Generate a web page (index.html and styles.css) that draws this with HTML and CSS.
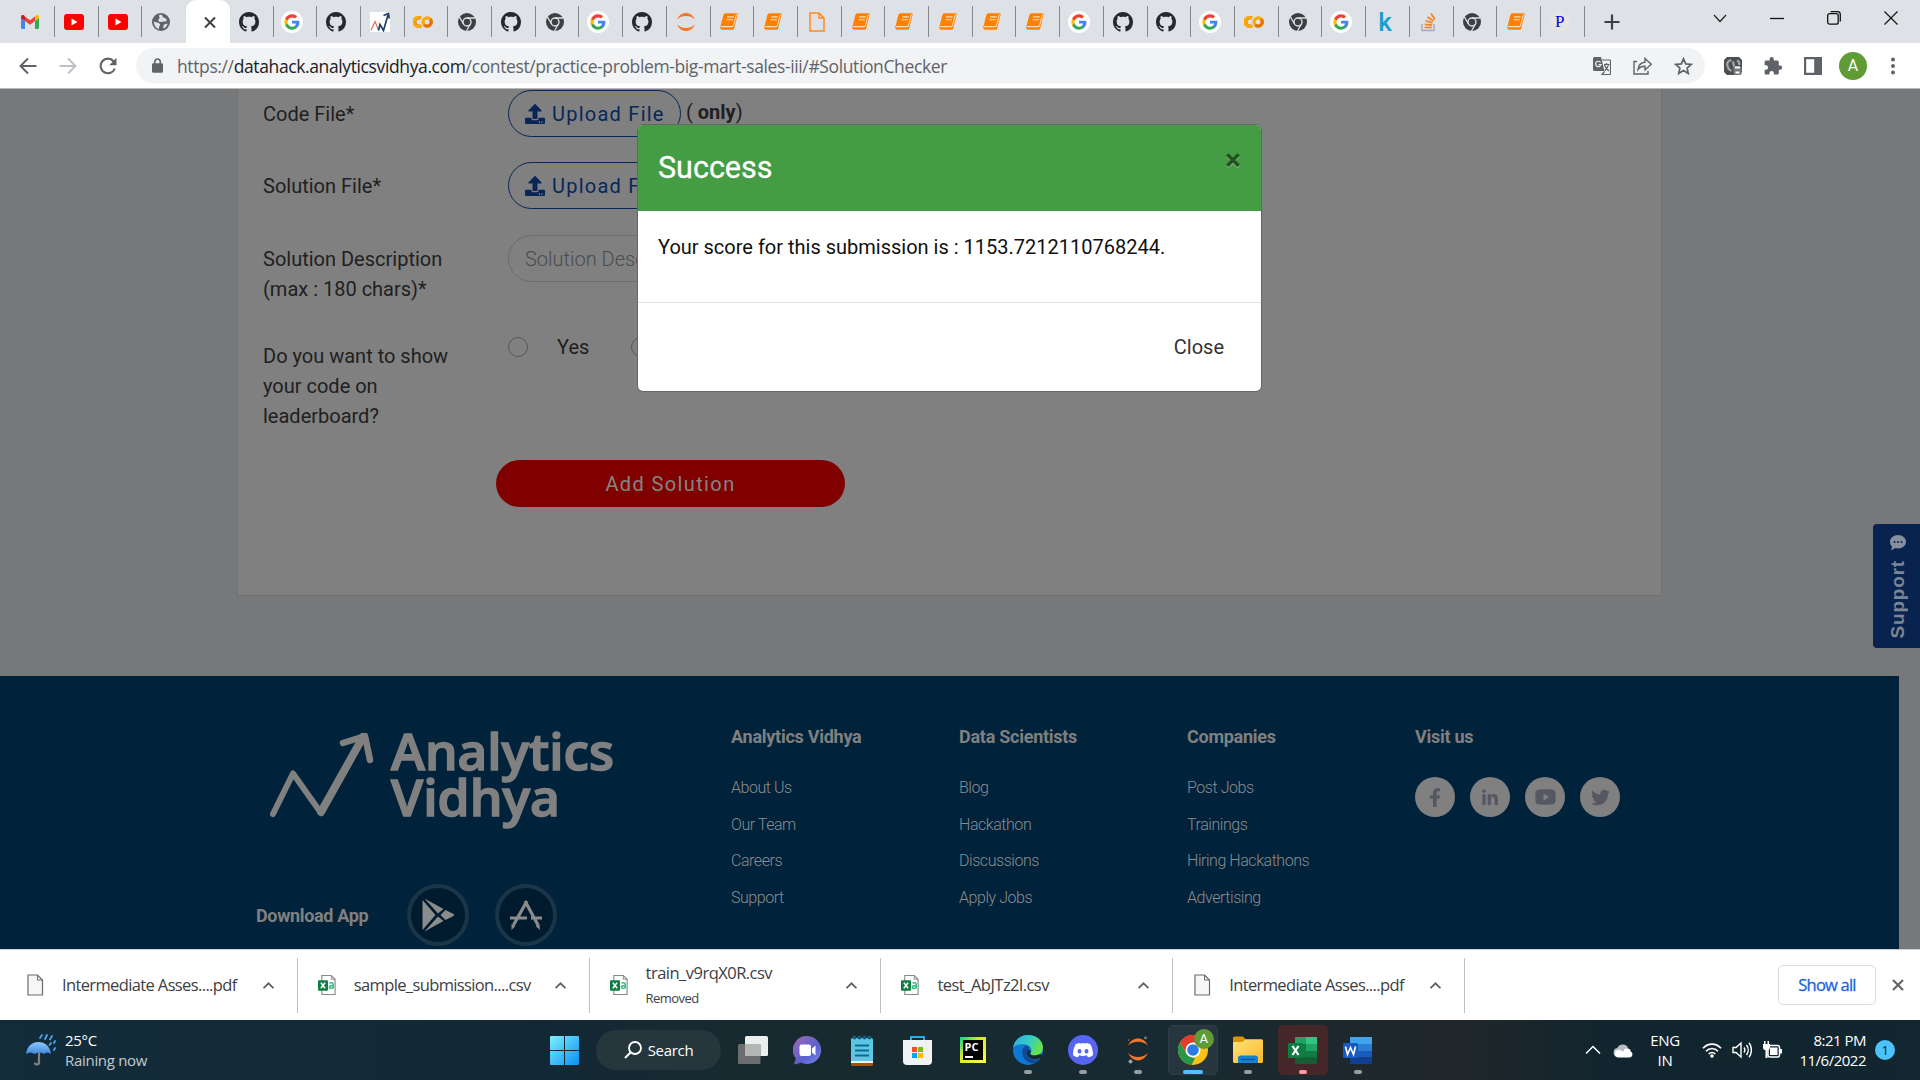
FILE: index.html
```html
<!DOCTYPE html>
<html lang="en">
<head>
<meta charset="utf-8">
<title>Big Mart Sales III</title>
<link rel="stylesheet" href="styles.css">
</head>
<body>
<svg class="defs" width="0" height="0" aria-hidden="true">
  <defs>
    <linearGradient id="lg-win" x1="0" y1="0" x2="1" y2="1"><stop offset="0" stop-color="#7df0fd"/><stop offset="1" stop-color="#0a8ef5"/></linearGradient>
    <linearGradient id="lg-chat" x1="0" y1="0" x2="1" y2="1"><stop offset="0" stop-color="#a06bb0"/><stop offset=".6" stop-color="#5b5fd0"/><stop offset="1" stop-color="#7a90f0"/></linearGradient>
    <linearGradient id="lg-edge" x1="0" y1="0" x2="1" y2=".4"><stop offset="0" stop-color="#2aa9e6"/><stop offset=".6" stop-color="#36cfc0"/><stop offset="1" stop-color="#6ae04a"/></linearGradient>
    <linearGradient id="lg-folder" x1="0" y1="0" x2="1" y2="1"><stop offset="0" stop-color="#ffe27a"/><stop offset="1" stop-color="#f9b82a"/></linearGradient>
    <linearGradient id="lg-umb" x1="0" y1="0" x2="0" y2="1"><stop offset="0" stop-color="#8cc8fa"/><stop offset="1" stop-color="#3c86de"/></linearGradient>
  </defs>
  <symbol id="gmail" viewBox="0 0 20 20"><path fill="#4285f4" d="M1 5.500v10A1.500 1.500 0 0 0 2.500 17H5V9z"/><path fill="#34a853" d="M19 5.500v10a1.500 1.500 0 0 1-1.500 1.500H15V9z"/><path fill="#fbbc04" d="M15 4.500V9l4-3V5c0-2-2-2.500-3.200-1.500z"/><path fill="#c5221f" d="M5 4.500V9L1 6V5c0-2 2-2.500 3.200-1.500z"/><path fill="#ea4335" d="M5 9V4.500l5 3.700 5-3.700V9l-5 3.700z"/></symbol>
  <symbol id="yt" viewBox="0 0 20 20"><rect y="2" width="20" height="16" rx="3" fill="#f00"/><path fill="#fff" d="M7.500 6.500v7l6-3.500z"/></symbol>
  <symbol id="globe" viewBox="0 0 20 20"><circle cx="10" cy="10" r="9" fill="#5f6368"/><path fill="#dee1e6" d="M9.500 2.500c2.500.2 1.500 2 3 3 1.800 1 3.500 1 3.200 3-.3 1.500-3.200.8-4.200 1.200-1.200.5-3.500.3-4.200-.9C6.500 7.500 9 7 8.500 5.500 8 4.500 7.500 3 9.500 2.500zM2.800 9.500c2 .8 5 .8 6.200 2.500.8 1.500-1.500 2-1 5.200-3-.9-5.100-3.700-5.200-7.700zM13 12.500l3.700-1c-.5 2.200-2 4.100-4 5-.6-1.200-.4-2.800.3-4z"/></symbol>
  <symbol id="gh" viewBox="0 0 16 16"><path fill="#24292f" d="M8 0C3.580 0 0 3.580 0 8c0 3.540 2.290 6.530 5.470 7.590.4.070.55-.17.55-.38 0-.19-.01-.82-.01-1.490-2.010.37-2.530-.49-2.690-.94-.09-.23-.48-.94-.82-1.130-.28-.15-.68-.52-.01-.53.63-.01 1.080.58 1.230.82.72 1.210 1.870.87 2.330.66.07-.52.28-.87.51-1.070-1.780-.2-3.640-.89-3.640-3.950 0-.87.31-1.590.82-2.150-.08-.2-.36-1.020.08-2.120 0 0 .67-.21 2.200.82.64-.18 1.320-.27 2-.27s1.360.09 2 .27c1.530-1.040 2.200-.82 2.200-.82.44 1.100.16 1.920.08 2.120.51.56.82 1.270.82 2.150 0 3.070-1.870 3.750-3.650 3.950.29.25.54.73.54 1.480 0 1.070-.01 1.930-.01 2.200 0 .21.15.46.55.38A8.010 8.010 0 0 0 16 8c0-4.420-3.580-8-8-8z"/></symbol>
  <symbol id="goog" viewBox="0 0 24 24"><circle cx="12" cy="12" r="12" fill="#fff"/><g transform="translate(2.900 2.900) scale(.76)"><path fill="#4285f4" d="M22.560 12.250c0-.78-.07-1.530-.2-2.250H12v4.260h5.920c-.26 1.370-1.040 2.530-2.210 3.310v2.770h3.570c2.080-1.920 3.280-4.740 3.280-8.090z"/><path fill="#34a853" d="M12 23c2.970 0 5.460-.98 7.280-2.660l-3.570-2.770c-.98.66-2.230 1.060-3.710 1.060-2.860 0-5.290-1.930-6.160-4.530H2.180v2.840C3.990 20.530 7.700 23 12 23z"/><path fill="#fbbc05" d="M5.840 14.090c-.22-.66-.35-1.360-.35-2.090s.13-1.430.35-2.090V7.070H2.180C1.430 8.550 1 10.220 1 12s.43 3.450 1.180 4.930z"/><path fill="#ea4335" d="M12 5.380c1.620 0 3.060.56 4.210 1.640l3.150-3.150C17.450 2.090 14.970 1 12 1 7.700 1 3.990 3.470 2.180 7.070l3.660 2.840c.87-2.600 3.300-4.530 6.160-4.530z"/></g></symbol>
  <symbol id="av" viewBox="0 0 20 20"><path fill="#fff" d="M0 0h20v20H0z"/><path fill="none" stroke="#e8603c" stroke-width="1.100" d="M1 18 5 9.500 8.500 18"/><path fill="none" stroke="#17406d" stroke-width="1.700" d="m8.500 18.500 1.500-6 3.500 6L18 3M13.500 3.500 18.500 1.500l.7 5"/></symbol>
  <symbol id="colab" viewBox="0 0 20 20"><g fill="none" stroke-width="3.200"><path stroke="#e8710a" d="M8 6.200A4.300 4.300 0 1 0 8 13.800"/><path stroke="#f9ab00" d="M7.500 6.100A4.400 4.400 0 1 0 8.200 13.200"/><circle cx="14.200" cy="10" r="4.100" stroke="#f9ab00"/><path stroke="#e8710a" d="M11.300 12.900a4.100 4.100 0 0 0 5.800-5.800"/></g></symbol>
  <symbol id="chr" viewBox="0 0 20 20"><circle cx="10" cy="10" r="9" fill="#3c4043"/><circle cx="10" cy="10" r="4" fill="none" stroke="#dee1e6" stroke-width="1.400"/><path stroke="#dee1e6" stroke-width="1.300" fill="none" d="M10 6h8M6.500 12 2.500 5.200M13.400 12l-3.900 7"/></symbol>
  <symbol id="jup" viewBox="0 0 20 20"><path fill="#f37726" d="M1 7.500C3 3 6.500 1 10 1s7 2 9 6.500C16.500 5 13.500 4 10 4S3.500 5 1 7.500zM1 12.500C3 17 6.500 19 10 19s7-2 9-6.500C16.500 15 13.500 16 10 16s-6.500-1-9-3.500z"/></symbol>
  <symbol id="book" viewBox="1 1.800 19 16.200" preserveAspectRatio="none"><path fill="#ff8000" d="M7 2h11.300c1 0 1.500.8 1.200 1.700L16 16.500c-.3.900-1 1.300-1.800 1.300H3.600c-1.700 0-2.700-1.300-2.200-3L4.500 4C4.900 2.700 5.700 2 7 2z"/><path fill="none" stroke="#ffe0bd" stroke-width="1" d="M8.500 5.500h7M7.700 8.200h7M2.200 14.800h11.500c.8 0 1.300-.3 1.600-1.100l3-10.500"/></symbol>
  <symbol id="nbfile" viewBox="0 0 20 20"><path fill="none" stroke="#ff8a1c" stroke-width="1.500" stroke-linejoin="round" d="M3 1h9l5 5v13H3zM12 1v5h5"/></symbol>
  <symbol id="so" viewBox="0 0 20 20"><path fill="none" stroke="#aab" stroke-width="1.600" d="M3 12v6.500h12V12"/><path stroke="#f48024" stroke-width="1.700" d="M5.500 15.500h7.500M5.700 12.300l7.400.9M6.500 8.700l7 2.200M8.500 5l6 4M12 1.500l4 6"/></symbol>
  <symbol id="up" viewBox="0 0 512 512"><path fill="currentColor" d="M296 384h-80c-13.300 0-24-10.700-24-24V192h-87.700c-17.800 0-26.700-21.500-14.100-34.100L242.300 5.700c7.500-7.500 19.800-7.500 27.300 0l152.200 152.200c12.600 12.600 3.700 34.100-14.100 34.100H320v168c0 13.300-10.700 24-24 24zm216-8v112c0 13.300-10.700 24-24 24H24c-13.300 0-24-10.700-24-24V376c0-13.300 10.700-24 24-24h136v8c0 30.900 25.100 56 56 56h80c30.900 0 56-25.100 56-56v-8h136c13.300 0 24 10.700 24 24zm-124 88c0-11-9-20-20-20s-20 9-20 20 9 20 20 20 20-9 20-20zm64 0c0-11-9-20-20-20s-20 9-20 20 9 20 20 20 20-9 20-20z"/></symbol>
  <symbol id="csv" viewBox="0 0 20 22"><path fill="#fff" stroke="#8a8a8a" stroke-width="1.200" d="M4 1h10l4 4v16H4z"/><path fill="none" stroke="#8a8a8a" d="M14 1v4h4"/><rect x="0" y="6" width="10.500" height="11" rx="1" fill="#107c41"/><path stroke="#fff" stroke-width="1.700" d="m3 8.500 4.500 6M7.500 8.500 3 14.500"/><path fill="none" stroke="#33c481" stroke-width="1.700" d="M12.200 9.300c1-1 3.800-1 3.800 1v4.500m0-3c-1.500-.2-4 0-4 1.600s3.300 1.700 4 0"/></symbol>
  <symbol id="pdf" viewBox="0 0 18 22"><path fill="#f7f7f7" stroke="#6b6b6b" stroke-width="1.200" d="M1.500 1H11l5 5v15H1.500z"/><path fill="none" stroke="#6b6b6b" d="M11 1v5h5"/></symbol>
  <symbol id="chev" viewBox="0 0 14 10"><path fill="none" stroke="#5f6368" stroke-width="2" d="m1.500 8 5.500-5.500L12.500 8"/></symbol>
</svg>

<header class="tabs">
  <div class="tab"><svg class="ico"><use href="#gmail"/></svg></div>
  <div class="tab"><svg class="ico"><use href="#yt"/></svg></div>
  <div class="tab"><svg class="ico"><use href="#yt"/></svg></div>
  <div class="tab bare"><svg class="ico"><use href="#globe"/></svg></div>
  <div class="tab active"><svg class="ico" viewBox="0 0 20 20"><path stroke="#3c4043" stroke-width="2" d="m5 5.500 10 10M15 5.500l-10 10"/></svg></div>
  <div class="tab"><svg class="ico"><use href="#gh"/></svg></div>
  <div class="tab"><svg class="ico big"><use href="#goog"/></svg></div>
  <div class="tab"><svg class="ico"><use href="#gh"/></svg></div>
  <div class="tab"><svg class="ico"><use href="#av"/></svg></div>
  <div class="tab"><svg class="ico"><use href="#colab"/></svg></div>
  <div class="tab"><svg class="ico"><use href="#chr"/></svg></div>
  <div class="tab"><svg class="ico"><use href="#gh"/></svg></div>
  <div class="tab"><svg class="ico"><use href="#chr"/></svg></div>
  <div class="tab"><svg class="ico big"><use href="#goog"/></svg></div>
  <div class="tab"><svg class="ico"><use href="#gh"/></svg></div>
  <div class="tab"><svg class="ico"><use href="#jup"/></svg></div>
  <div class="tab"><svg class="ico book"><use href="#book"/></svg></div>
  <div class="tab"><svg class="ico book"><use href="#book"/></svg></div>
  <div class="tab"><svg class="ico"><use href="#nbfile"/></svg></div>
  <div class="tab"><svg class="ico book"><use href="#book"/></svg></div>
  <div class="tab"><svg class="ico book"><use href="#book"/></svg></div>
  <div class="tab"><svg class="ico book"><use href="#book"/></svg></div>
  <div class="tab"><svg class="ico book"><use href="#book"/></svg></div>
  <div class="tab"><svg class="ico book"><use href="#book"/></svg></div>
  <div class="tab"><svg class="ico big"><use href="#goog"/></svg></div>
  <div class="tab"><svg class="ico"><use href="#gh"/></svg></div>
  <div class="tab"><svg class="ico"><use href="#gh"/></svg></div>
  <div class="tab"><svg class="ico big"><use href="#goog"/></svg></div>
  <div class="tab"><svg class="ico"><use href="#colab"/></svg></div>
  <div class="tab"><svg class="ico"><use href="#chr"/></svg></div>
  <div class="tab"><svg class="ico big"><use href="#goog"/></svg></div>
  <div class="tab"><span class="kaggle">k</span></div>
  <div class="tab"><svg class="ico"><use href="#so"/></svg></div>
  <div class="tab"><svg class="ico"><use href="#chr"/></svg></div>
  <div class="tab"><svg class="ico book"><use href="#book"/></svg></div>
  <div class="tab"><span class="pfav">P</span></div>
  <svg class="plus" viewBox="0 0 16 16"><path stroke="#3c4043" stroke-width="2.200" d="M8 .5v15M.5 8h15"/></svg>
  <div class="winctl">
    <svg width="14" height="9" viewBox="0 0 14 9"><path fill="none" stroke="#222" stroke-width="1.200" d="m1 1 6 6.500L13 1"/></svg>
    <svg width="14" height="14" viewBox="0 0 14 14"><path stroke="#111" stroke-width="1.300" d="M0 7.500h14"/></svg>
    <svg width="14" height="14" viewBox="0 0 14 14"><rect x=".7" y="2.700" width="10.500" height="10.500" rx="2" fill="none" stroke="#111" stroke-width="1.300"/><path fill="none" stroke="#111" stroke-width="1.300" d="M3.500.7h7c1.800 0 2.800 1 2.800 2.800v7"/></svg>
    <svg width="14" height="14" viewBox="0 0 14 14"><path stroke="#111" stroke-width="1.200" d="m.5.5 13 13m0-13-13 13"/></svg>
  </div>
</header>

<nav class="toolbar">
  <div class="navbtns">
    <svg width="18" height="18" viewBox="0 0 18 18"><path fill="none" stroke="#5f6368" stroke-width="2" d="M17.500 9H2M9 1.500 1.500 9 9 16.500"/></svg>
    <svg width="18" height="18" viewBox="0 0 18 18"><path fill="none" stroke="#bdc1c6" stroke-width="2" d="M.5 9H16M9 1.500 16.500 9 9 16.500"/></svg>
    <svg width="18" height="18" viewBox="0 0 18 18"><path fill="none" stroke="#5f6368" stroke-width="2.100" d="M15.800 11.500A7.300 7.300 0 1 1 14.500 4.200l1.500 1.800"/><path fill="#5f6368" d="M17.500.8v7.400h-7.300z"/></svg>
  </div>
  <div class="omni">
    <svg class="lock" viewBox="0 0 12 16"><rect y="5.500" width="12" height="10.500" rx="1.500" fill="#5f6368"/><path fill="none" stroke="#5f6368" stroke-width="1.700" d="M3 6V4a3 3 0 0 1 6 0v2"/></svg>
    <span class="url">https://<b>datahack.analyticsvidhya.com</b>/contest/practice-problem-big-mart-sales-iii/#SolutionChecker</span>
    <div class="omniacts">
      <svg width="18" height="18" viewBox="0 0 18 18"><path fill="#5f6368" d="M1.500 0H8l3.500 14H1.500A1.500 1.500 0 0 1 0 12.500v-11A1.500 1.500 0 0 1 1.500 0z"/><path fill="none" stroke="#f1f3f4" stroke-width="1.200" d="M7.500 5.300A2.700 2.700 0 1 0 8 7.500H5.500"/><path fill="none" stroke="#5f6368" stroke-width="1.200" d="M9 3h7.500c.6 0 1 .4 1 1v12.500c0 .6-.4 1-1 1H9l2.500-3M11 7.500h5.500M13.500 6v1.500M15.500 7.500c-.5 3-2 4.500-3.500 6M11.500 8c1 3 2.500 4.500 4.500 6"/></svg>
      <svg width="19" height="18" viewBox="0 0 19 18"><path fill="none" stroke="#5f6368" stroke-width="1.400" d="M4 4.500H1V17h14v-3M5 12.500C5.500 8 8 5.500 12 5.200V1.500l6.200 5.800L12 13V9.300c-3-.1-5.300.9-7 3.200z"/></svg>
      <svg width="19" height="18" viewBox="0 0 19 18"><path fill="none" stroke="#5f6368" stroke-width="1.700" d="m9.500 1.800 2.200 5.100 5.500.5-4.100 3.700 1.200 5.400-4.800-2.900-4.800 2.900 1.200-5.400-4.100-3.700 5.500-.5z"/></svg>
    </div>
  </div>
  <div class="exts">
    <svg width="18" height="18" viewBox="0 0 18 18"><path fill="#4c4f52" d="M3 0h12l3 3v12l-3 3H3l-3-3V3z"/><path fill="none" stroke="#a4a6a8" stroke-width="2.200" d="M7.500 3.500C4.500 3 2.500 6 3.500 9s2.500 5 4 4M9 4.500c.5 3 1 4 1.500 6M13 3.500c2.500 1 2.500 3 2 4.500"/><rect x="9.500" y="9" width="8" height="9" rx="1.500" fill="#77797b"/><path stroke="#fff" stroke-width="1.800" fill="none" d="M11 10.500h5M11.500 15.500h4"/></svg>
    <svg width="18" height="18" viewBox="0 0 18 18"><path fill="#5f6368" d="M16 8.500h-1.200V5c0-.9-.7-1.600-1.600-1.600H9.800V2.200a2.100 2.100 0 0 0-4.200 0v1.200H2.200C1.300 3.400.6 4.100.6 5v3.200h1.200a2.200 2.200 0 0 1 0 4.500H.6v3.200c0 .9.700 1.600 1.600 1.600h3.200v-1.200a2.200 2.200 0 0 1 4.500 0v1.200h3.300c.9 0 1.600-.7 1.600-1.600v-3.200H16a2.100 2.100 0 0 0 0-4.200z"/></svg>
    <svg width="18" height="18" viewBox="0 0 18 18"><path fill="#5f6368" fill-rule="evenodd" d="M0 0h18v18H0zM2.200 2.200v13.600h8V2.200z"/></svg>
    <span class="avatar">A</span>
    <svg width="18" height="18" viewBox="0 0 18 18"><g fill="#5f6368"><circle cx="9" cy="2.500" r="2"/><circle cx="9" cy="9" r="2"/><circle cx="9" cy="15.500" r="2"/></g></svg>
  </div>
</nav>

<main class="page">
  <section class="card">
    <div class="row r1"><label>Code File*</label><span class="upload"><svg><use href="#up"/></svg>Upload File</span><span class="only">( <b>only</b>)</span></div>
    <div class="row r2"><label>Solution File*</label><span class="upload"><svg><use href="#up"/></svg>Upload File</span></div>
    <div class="row r3"><label>Solution Description<br>(max : 180 chars)*</label><span class="field">Solution Description</span></div>
    <div class="row r4"><label>Do you want to show<br>your code on<br>leaderboard?</label><span class="radios"><i></i><span>Yes</span><i></i></span></div>
    <div class="submit">Add Solution</div>
  </section>

  <footer class="foot">
    <div class="brand">
      <svg class="logo" viewBox="0 0 360 100"><path fill="none" stroke="#808080" stroke-width="6" stroke-linecap="round" stroke-linejoin="round" d="M7 84 27 43.500 55 83"/><path fill="none" stroke="#808080" stroke-width="8" stroke-linecap="round" stroke-linejoin="round" d="M55 82 97 7"/><path fill="none" stroke="#808080" stroke-width="6.500" stroke-linecap="round" stroke-linejoin="round" d="M77 13 99 6l5 24"/><text x="125" y="39.500" textLength="223" lengthAdjust="spacingAndGlyphs">Analytics</text><text x="125" y="86" textLength="169" lengthAdjust="spacingAndGlyphs">Vidhya</text></svg>
      <div class="apps"><strong>Download App</strong>
        <span class="app"><svg width="34" height="34" viewBox="0 0 34 34"><g fill="#8c8c8c"><path d="M1.500 2v30L14.500 17z"/><path d="M3.500.5 22.500 11 17 15.500zM3.500 33.500 22.500 23 17 18.500zM24.500 12l8 4q1.500 1 0 2l-8 4-5-5z"/></g></svg></span>
        <span class="app"><svg width="34" height="32" viewBox="0 0 34 32"><path fill="none" stroke="#8c8c8c" stroke-width="3.200" d="M18 2 4.500 26M16 2l13 24M1 19h17M22 19h11"/><path fill="#8c8c8c" d="m2.500 25 4 2-4 4zM30.500 25l-4 2 4.500 4z"/></svg></span>
      </div>
    </div>
    <div class="col"><h4>Analytics Vidhya</h4><a>About Us</a><a>Our Team</a><a>Careers</a><a>Support</a></div>
    <div class="col"><h4>Data Scientists</h4><a>Blog</a><a>Hackathon</a><a>Discussions</a><a>Apply Jobs</a></div>
    <div class="col"><h4>Companies</h4><a>Post Jobs</a><a>Trainings</a><a>Hiring Hackathons</a><a>Advertising</a></div>
    <div class="col"><h4>Visit us</h4>
      <div class="social">
        <span><svg width="12" height="19" viewBox="0 0 320 512"><path d="M279 288l14-93h-89v-60c0-25 12-50 52-50h41V7s-37-7-72-7c-73 0-121 44-121 125v70H23v93h81v224h100V288z"/></svg></span>
        <span><svg width="18" height="18" viewBox="0 0 448 512"><path d="M100.300 480H7.400V180.900h92.900zM53.800 140.100C24.100 140.100 0 115.500 0 85.800a53.800 53.800 0 0 1 107.600 0c0 29.700-24.100 54.300-53.800 54.300zM447.900 480h-92.700V334.400c0-34.700-.7-79.200-48.300-79.200-48.300 0-55.700 37.700-55.700 76.700V480h-92.800V180.900h89.100v40.800h1.300c12.400-23.500 42.700-48.300 87.900-48.300 94 0 111.300 61.900 111.300 142.300z"/></svg></span>
        <span><svg width="21" height="16" viewBox="0 0 21 16"><path fill-rule="evenodd" d="M3 .8C6 .2 15 .2 18 .8c2 .4 2.700 2 2.700 7.200s-.7 6.800-2.700 7.200c-3 .6-12 .6-15 0C1 14.800.3 13.200.3 8S1 1.200 3 .8zM8.500 4.600v6.800L14.300 8z"/></svg></span>
        <span><svg width="19" height="19" viewBox="0 0 512 512"><path d="M459.400 151.700c.3 4.500.3 9.100.3 13.600 0 138.700-105.600 298.600-298.600 298.600-59.500 0-114.700-17.200-161.100-47.100 8.400 1 16.600 1.300 25.300 1.300 49.100 0 94.200-16.600 130.300-44.800-46.100-1-84.800-31.200-98.100-72.800 6.500 1 13 1.600 19.800 1.600 9.400 0 18.800-1.300 27.600-3.600-48.100-9.700-84.100-52-84.100-103v-1.300c14 7.800 30.200 12.700 47.400 13.300-28.300-18.800-46.800-51-46.800-87.400 0-19.500 5.200-37.400 14.300-53 51.700 63.700 129.300 105.300 216.400 109.800-1.600-7.800-2.600-15.900-2.600-24 0-57.800 46.800-104.900 104.900-104.900 30.200 0 57.500 12.700 76.700 33.100 23.700-4.500 46.500-13.300 66.600-25.300-7.800 24.400-24.400 44.800-46.100 57.800 21.100-2.300 41.600-8.100 60.400-16.200-14.300 20.800-32.200 39.300-52.600 54.300z"/></svg></span>
      </div>
    </div>
  </footer>

  <aside class="support"><span>Support</span><svg width="16" height="16" viewBox="0 0 16 16"><path fill="#868f9e" d="M8 0c4.500 0 8 3 8 6.800s-3.500 6.700-8 6.700c-1 0-2-.1-2.800-.4C4 14.300 2 15 .5 15c1-1 1.500-2 1.500-3.500C.7 10.300 0 8.600 0 6.800 0 3 3.500 0 8 0z"/><g fill="#08234f"><circle cx="4.500" cy="7" r="1"/><circle cx="8" cy="7" r="1"/><circle cx="11.500" cy="7" r="1"/></g></svg></aside>

  <div class="modal" role="dialog">
    <div class="mhead"><h2>Success</h2><span class="mx">×</span></div>
    <div class="mbody">Your score for this submission is : 1153.7212110768244.</div>
    <div class="mfoot">Close</div>
  </div>
</main>

<section class="shelf">
  <div class="dl"><svg class="fi"><use href="#pdf"/></svg><span class="fn">Intermediate Asses....pdf</span><svg class="cv"><use href="#chev"/></svg></div>
  <div class="dl"><svg class="fi"><use href="#csv"/></svg><span class="fn">sample_submission....csv</span><svg class="cv"><use href="#chev"/></svg></div>
  <div class="dl"><svg class="fi"><use href="#csv"/></svg><span class="fn short two"><span>train_v9rqX0R.csv</span><small>Removed</small></span><svg class="cv"><use href="#chev"/></svg></div>
  <div class="dl"><svg class="fi"><use href="#csv"/></svg><span class="fn short">test_AbJTz2l.csv</span><svg class="cv"><use href="#chev"/></svg></div>
  <div class="dl"><svg class="fi"><use href="#pdf"/></svg><span class="fn">Intermediate Asses....pdf</span><svg class="cv"><use href="#chev"/></svg></div>
  <span class="showall">Show all</span>
  <svg class="shx" viewBox="0 0 12 12"><path stroke="#5f6368" stroke-width="2.100" d="m1 1 10 10M11 1 1 11"/></svg>
</section>

<footer class="task">
  <div class="weather">
    <svg width="30" height="32" viewBox="0 0 30 32"><path fill="none" stroke="#8b8078" stroke-width="2.200" d="M13 17v11c0 3.500-4 3-4 .5"/><path fill="url(#lg-umb)" d="M0 20C1 12 6 8 12.500 8S24 12 25 20c-2.500-2-5-2-7 0-2-1.800-7-1.800-9.500 0C6 18 3 18 0 20z"/><path stroke="#4aa3ee" stroke-width="1.800" stroke-linecap="round" d="m16 1-2 3M21 1l-2 4M26 2l-2 3.500M29 7l-1 2M25 9l-1.500 2M29 14l-1 2"/></svg>
    <div class="wt"><span>25°C</span><span class="dim">Raining now</span></div>
  </div>
  <div class="apps-bar">
    <svg width="29" height="29" viewBox="0 0 29 29"><path fill="url(#lg-win)" d="M1 0h13v14H0V1a1 1 0 0 1 1-1zM15 0h13a1 1 0 0 1 1 1v13H15zM0 15h14v14H1a1 1 0 0 1-1-1zM15 15h14v13a1 1 0 0 1-1 1H15z"/></svg>
    <div class="search"><svg width="18" height="18" viewBox="0 0 18 18"><circle cx="11" cy="7" r="6" fill="none" stroke="#fff" stroke-width="1.800"/><path stroke="#fff" stroke-width="2" d="M6.500 11.500 1 17"/></svg>Search</div>
    <div class="cell"><svg width="30" height="28" viewBox="0 0 30 28"><rect x="7" y="0" width="23" height="20" rx="1.500" fill="#eceeee"/><rect x="0" y="8" width="22.500" height="20" rx="1.500" fill="#6b6d6e"/><path fill="#b4b6b6" d="M7 8h15.500v12H7z"/></svg></div>
    <div class="cell"><svg width="29" height="29" viewBox="0 0 29 29"><path fill="url(#lg-chat)" d="M14.500 0a14 14 0 1 1-6 26.800L1 28.500l1.800-6A14 14 0 0 1 14.500 0z"/><rect x="6.500" y="8.500" width="11.500" height="11.500" rx="2" fill="#fff"/><path fill="#fff" d="m19 12.500 3.500-3v10l-3.500-3z"/></svg></div>
    <div class="cell"><svg width="23" height="31" viewBox="0 0 23 31"><rect x="0" y="3" width="22" height="26" rx="1.500" fill="#5cc6e4"/><path fill="#f0f0ee" d="M0 26h22v2H0z"/><path fill="#a4500f" d="M0 28h22v1.500a1.500 1.500 0 0 1-1.500 1.500h-19A1.500 1.500 0 0 1 0 29.500z"/><path stroke="#0d6a91" stroke-width="2" d="M4 10.500h14M4 15.500h14M4 20.500h14"/><g fill="#0f5a80"><circle cx="3.500" cy="2.500" r="2"/><circle cx="8.500" cy="2.500" r="2"/><circle cx="13.500" cy="2.500" r="2"/><circle cx="18.500" cy="2.500" r="2"/></g></svg></div>
    <div class="cell"><svg width="29" height="29" viewBox="0 0 29 29"><path fill="none" stroke="#29a9ea" stroke-width="2" d="M8 6V1h13v5"/><path fill="#f1f2f3" d="M0 4h29v21a4 4 0 0 1-4 4H4a4 4 0 0 1-4-4z"/><path fill="#f25022" d="M9 11h5v5H9z"/><path fill="#7fba00" d="M15 11h5v5h-5z"/><path fill="#00a4ef" d="M9 17h5v5H9z"/><path fill="#ffb900" d="M15 17h5v5h-5z"/></svg></div>
    <div class="cell"><span class="pyc">PC<i></i></span></div>
    <div class="cell run"><svg width="30" height="30" viewBox="0 0 30 30"><circle cx="15" cy="15" r="15" fill="#0f78d4"/><path fill="url(#lg-edge)" d="M0 13C1 5 7 0 15 0c9 0 15 6 15 12.500 0 5-3.500 8-8 8-3.500 0-5.300-1.200-4.500-2.500 2-3 .5-7.500-5-8.500C7 8.500 2 10 0 13z"/><path fill="#134a94" d="M13 10.500c-6 3-5 14 4 17.500 4.500 1.500 8.500-1 11-5-5 3-14 1.500-14-5 0-1.500.8-2.500 2-3.500 0-2-1-3.500-3-4z"/><path fill="#16292f" d="M14.500 15.500c2-1.500 4 0 3 2.500-1 1.500.7 2.500 4.500 2.500l4-1c3-1 4 1 2.500 3-6 3-14 1.500-14.500-4z"/></svg></div>
    <div class="cell run"><svg width="30" height="30" viewBox="0 0 30 30"><circle cx="15" cy="15" r="15" fill="#5865f2"/><path fill="#fff" fill-rule="evenodd" d="M12 8.500 11.500 8C9.500 8.300 8 9 7.500 9.500 5.500 13 5 16.500 5 20c1.500 1.500 3.500 2.200 5 2.200l1.200-1.900c2.500.8 5.100.8 7.600 0l1.200 1.900c1.500 0 3.500-.7 5-2.200 0-3.500-.5-7-2.500-10.500C22 9 20.500 8.300 18.500 8l-.5.500c-2-.3-4-.3-6 0zM11.500 14a2 2.200 0 1 0 0 4.400 2 2.200 0 0 0 0-4.400zm7 0a2 2.200 0 1 0 0 4.400 2 2.200 0 0 0 0-4.400z"/></svg></div>
    <div class="cell run"><svg width="22" height="28" viewBox="0 0 22 28"><path fill="#f37726" d="M1 9.500C3 5 7 2.500 11 2.500S19 5 21 9.500C18 7 15 5.800 11 5.800S4 7 1 9.500zM1 17c2 4.500 6 7.500 10 7.500s8-3 10-7.500c-3 2.800-6 4-10 4s-7-1.200-10-4z"/><circle cx="18.500" cy="1.700" r="1.500" fill="#777"/><circle cx="3.500" cy="25.500" r="2" fill="#9e9e9e"/><circle cx="1.500" cy="4" r="1" fill="#666"/></svg></div>
    <div class="cell run box blue"><svg width="30" height="30" viewBox="0 0 30 30"><circle cx="15" cy="15" r="15" fill="#fbc116"/><path fill="#e33b2e" d="M2 7.500A15 15 0 0 1 28 7.500H15l-6.500 11z"/><path fill="#279847" d="M2 7.500 8.500 18.800 15 22.500l2 1L13.500 30A15 15 0 0 1 2 7.500z"/><circle cx="15" cy="15" r="7.500" fill="#fff"/><circle cx="15" cy="15" r="5.800" fill="#2c7be5"/></svg><span class="badge">A</span></div>
    <div class="cell run"><svg width="30" height="28" viewBox="0 0 30 28"><path fill="#d99408" d="M0 2a1.500 1.500 0 0 1 1.500-1.500H10l3 3.500-3 3H0z"/><path fill="url(#lg-folder)" d="M0 6h9.500l3-2.700h16c.9 0 1.500.6 1.500 1.500v20.700c0 .9-.6 1.500-1.500 1.500h-27C.6 27 0 26.400 0 25.500z"/><path fill="#1481d3" d="M5 27v-5c0-1.500 1-2.500 2.500-2.500h15c1.500 0 2.500 1 2.500 2.500v5z"/><path stroke="#0a56a0" stroke-width="1.300" d="M8 23.500h14"/></svg></div>
    <div class="cell run box red"><svg width="29" height="27" viewBox="0 0 29 27"><path fill="#185c37" d="M7 0h22v27H7z"/><path fill="#21a366" d="M7 0h11v7H7z"/><path fill="#33c481" d="M18 0h11v7H18z"/><path fill="#107c41" d="M7 7h11v13H7z"/><path fill="#21a366" d="M18 7h11v7H18z"/><path fill="#107c41" d="M18 14h11v6.500H18z"/><rect y="6" width="15" height="15" rx="1.200" fill="#107c41"/><path stroke="#fff" stroke-width="2.200" d="m4.500 9 6 9M10.500 9l-6 9"/></svg></div>
    <div class="cell run"><svg width="29" height="27" viewBox="0 0 29 27"><path fill="#41a5ee" d="M7 0h22v7H7z"/><path fill="#2b7cd3" d="M7 7h22v7H7z"/><path fill="#185abd" d="M7 14h22v6.500H7z"/><path fill="#103f91" d="M7 20.500h22V27H7z"/><rect y="6" width="15" height="15" rx="1.200" fill="#185abd"/><path fill="none" stroke="#fff" stroke-width="1.600" d="m2.500 9.500 2 8 3-7 3 7 2-8"/></svg></div>
  </div>
  <div class="tray">
    <svg width="16" height="10" viewBox="0 0 16 10"><path fill="none" stroke="#fff" stroke-width="1.500" d="m1 8.500 7-7 7 7"/></svg>
    <svg width="20" height="15" viewBox="0 0 20 15"><path fill="#b9bcc0" d="M5 14a4.500 4.500 0 0 1-.8-8.900A6 6 0 0 1 15 4.500L9 9z"/><path fill="#fff" d="M4.500 14.500A4 4 0 0 1 4 7c3-1 4.500 1 6 1.500 1-3 4-4.300 6.500-2.500 1 1 1.200 2 1.200 2.500A3.200 3.200 0 0 1 17 14.500z"/></svg>
    <div class="lang"><span>ENG</span><span>IN</span></div>
    <svg width="20" height="16" viewBox="0 0 20 16"><g fill="none" stroke="#fff" stroke-width="1.600"><path d="M1 6.200c5-5.500 13-5.500 18 0M4 9.300c3.500-3.700 8.500-3.700 12 0M6.700 12c2-2 4.600-2 6.600 0"/></g><circle cx="10" cy="14" r="1.800" fill="#fff"/></svg>
    <svg width="20" height="18" viewBox="0 0 20 18"><g fill="none" stroke="#fff" stroke-width="1.400"><path d="M1 6.500v5h3l5 4.500V2L4 6.500zM12 6.500c1 1.500 1 3.500 0 5M14.500 4c2.200 2.800 2.200 7 0 10M17 1.800c3.200 4 3.200 10.300 0 14.400"/></g></svg>
    <svg width="20" height="18" viewBox="0 0 20 18"><rect x="6" y="4.500" width="11.500" height="11.500" rx="2" fill="none" stroke="#fff" stroke-width="1.500"/><path fill="#fff" d="M8 6.500h7.500V14H8zM18 8h2v4.500h-2zM1 3h1V0h1.500v3h2V0H7v3h1v3.500C8 8 7 9 5.500 9.200V17h-2V9.200C2 9 1 8 1 6.500z"/></svg>
    <div class="clock"><span>8:21 PM</span><span>11/6/2022</span></div>
    <span class="notif">1</span>
  </div>
</footer>
</body>
</html>
```
FILE: styles.css
```css
* { box-sizing: border-box; }
body {
  margin: 0;
  width: 1920px;
  height: 1080px;
  overflow: hidden;
  display: grid;
  grid-template-rows: 43px 46px 860px 71px 60px;
  font-family: Roboto, "Liberation Sans", sans-serif;
}
svg { display: block; flex: none; }
.defs { position: absolute; }

/* tab strip */
.tabs { background: #dee1e6; display: flex; align-items: center; padding-left: 11.300px; }
.tab {
  width: 43.710px;
  height: 31px;
  flex: none;
  display: flex;
  align-items: center;
  justify-content: center;
  padding-right: 5px;
  border-right: 1px solid #84878b;
}
.tab.bare { border-color: transparent; }
.tab.active {
  height: 43px;
  background: #fff;
  border: 0;
  padding: 0 0 0 4px;
  border-radius: 10px 10px 0 0;
}
.ico { width: 20px; height: 20px; }
.ico.big { width: 22px; height: 22px; }
.ico.book { width: 18px; height: 17px; }
.kaggle { font: 500 26px/24px Roboto, sans-serif; color: #1a9fcf; }
.pfav {
  width: 20px;
  height: 20px;
  border-radius: 50%;
  background: #e6e5e6;
  color: #0b00e0;
  font: 17px/20px "Liberation Serif", serif;
  text-align: center;
}
.plus { width: 16px; height: 16px; margin-left: 19px; }
.winctl { margin: -7px 22px 0 auto; display: flex; align-items: center; gap: 43px; }

/* toolbar */
.toolbar { background: #fff; border-bottom: 1px solid #b9b9ba; display: flex; align-items: center; }
.navbtns { width: 136px; padding-left: 19px; display: flex; gap: 22px; }
.omni { width: 1569px; height: 35px; border-radius: 18px; background: #f1f3f4; display: flex; align-items: center; padding-left: 16px; }
.lock { width: 11px; height: 15px; margin-right: 14px; }
.url { font: 17.500px/24px "Open Sans", "Noto Sans", sans-serif; letter-spacing: -.380px; color: #5f6368; white-space: nowrap; }
.url b { font-weight: 400; color: #202124; }
.omniacts { margin: 0 12px 0 auto; display: flex; gap: 22px; }
.exts { display: flex; align-items: center; gap: 22px; padding-left: 19px; }
.avatar { width: 28px; height: 28px; margin: 0 -5px; border-radius: 50%; background: #5f9c36; color: #fff; font-size: 16px; line-height: 28px; text-align: center; }

/* page */
.page { position: relative; overflow: hidden; background: #777879; }
.card { margin-left: 237px; width: 1425px; height: 507px; padding: 1px 0 0 25px; background: #808080; border: solid #707172; border-width: 0 1px 1px; color: #202020; font-size: 20px; line-height: 30px; }
.row { display: flex; align-items: flex-start; }
.row label { width: 245px; flex: none; }
.r1, .r2 { height: 47px; align-items: center; }
.r2 { margin-top: 25px; }
.r3 { margin-top: 26px; height: 102px; }
.r3 label { padding-top: 9px; }
.r4 { height: 123px; }
.r4 label { padding-top: 4px; }
.upload { width: 173px; height: 47px; border: 1px solid #082659; border-radius: 24px; display: flex; align-items: center; color: #082659; letter-spacing: 1.250px; padding-left: 16px; white-space: nowrap; }
.upload svg { width: 20px; height: 20px; margin-right: 7px; }
.only { margin: -3px 0 0 5px; }
.field { width: 350px; height: 47px; border: 1px solid #6b6c6d; border-radius: 24px; padding: 8px 16px; color: #4a4d50; font-weight: 300; }
.radios { display: flex; align-items: center; line-height: 20px; }
.radios i { width: 20px; height: 20px; border: 1px solid #55585b; border-radius: 50%; }
.radios span { margin: 0 42px 0 29px; }
.submit { margin-left: 233px; width: 349px; height: 47px; border-radius: 24px; background: #800000; color: #858585; line-height: 48px; text-align: center; letter-spacing: 1.380px; }

/* site footer */
.foot { margin-top: 80px; width: 1899px; height: 273px; background: #00223a; display: flex; color: #808080; padding-left: 256px; }
.brand { width: 475px; padding-top: 54px; }
.logo { width: 360px; height: 100px; margin-left: 10px; }
.logo text { font: 600 51px "Open Sans", "Noto Sans", sans-serif; fill: #808080; stroke: #808080; stroke-width: 1.600px; }
.apps { display: flex; align-items: center; margin-top: 54px; }
.apps strong { font-size: 18px; width: 151px; letter-spacing: -.350px; }
.app { width: 62px; height: 62px; margin-right: 26px; border: 4px solid #1a3448; border-radius: 50%; background: #001a2e; display: flex; align-items: center; justify-content: center; }
.col { width: 228px; padding-top: 49px; display: flex; flex-direction: column; }
.col h4 { margin: 0 0 27px; font-size: 18px; line-height: 24px; letter-spacing: -.260px; }
.col a { font-size: 16px; line-height: 24px; margin-bottom: 12.600px; font-weight: 300; color: #8b8d90; letter-spacing: -.450px; }
.social { display: flex; gap: 15px; margin-top: 1px; }
.social span { width: 40px; height: 40px; border-radius: 50%; background: #808080; display: flex; align-items: center; justify-content: center; }
.social svg { fill: #555862; }

.support { position: absolute; right: 0; top: 435px; width: 47px; height: 124px; border-radius: 4px 0 0 4px; background: #08234f; display: flex; flex-direction: column-reverse; align-items: center; justify-content: space-between; padding: 11px 0 10px 3px; }
.support span { writing-mode: vertical-rl; transform: rotate(180deg); font: bold 19px/22px "Liberation Sans", Arial, sans-serif; letter-spacing: .8px; color: #7c8595; }

/* dialog */
.modal { position: absolute; left: 638px; top: 36px; width: 623px; height: 266px; background: #fff; border-radius: 5px; overflow: hidden; box-shadow: 0 0 0 1px #666; color: #333; font-size: 20px; }
.mhead { height: 86px; background: #449d44; display: flex; justify-content: space-between; padding: 0 20px; }
.mhead h2 { margin: 0; font-size: 30.500px; line-height: 86px; font-weight: 400; color: #fff; -webkit-text-stroke: .3px #fff; }
.mx { font: bold 30px/70px Roboto, sans-serif; color: #22501f; text-shadow: 0 1px 0 #8ab98a; }
.mbody { height: 92px; padding: 21px 20px; line-height: 30px; border-bottom: 1px solid #dee2e6; color: #101010; }
.mfoot { text-align: right; padding: 0 37px; line-height: 89px; }

/* downloads */
.shelf { background: #fff; border-top: 1px solid #c9d0d6; display: flex; align-items: center; font: 16.500px/20px "Open Sans", "Noto Sans", sans-serif; color: #3c4043; }
.dl { width: 291.800px; height: 55px; border-right: 1px solid #c0c0c0; display: flex; align-items: center; padding: 0 22px 0 20px; letter-spacing: -.630px; white-space: nowrap; }
.dl:first-child { width: 297.800px; padding-left: 26px; }
.fi { width: 19px; height: 22px; }
.fn { margin-left: 17px; }
.fn.short { letter-spacing: -.520px; }
.two { display: flex; flex-direction: column; gap: 5px; }
.two small { font-size: 13px; letter-spacing: -.550px; }
.cv { width: 13px; height: 9px; margin-left: auto; }
.showall { margin-left: auto; width: 98px; height: 40px; border: 1px solid #dadce0; border-radius: 5px; color: #1a63e0; line-height: 37px; text-align: center; letter-spacing: -.8px; -webkit-text-stroke: .3px #1a63e0; }
.shx { width: 12px; height: 12px; margin: 0 16px 0 16px; }

/* taskbar */
.task { background: linear-gradient(90deg, #132c3a 0, #122835 28%, #172a30 38%, #172a31 60%, #20272a 76%, #11252f 84%, #12262f); display: flex; align-items: center; color: #fff; font: 15px/20px "Open Sans", "Noto Sans", sans-serif; letter-spacing: -.3px; }
.weather { width: 550px; padding-left: 26px; display: flex; align-items: center; gap: 9px; }
.wt, .lang, .clock { display: flex; flex-direction: column; }
.dim { color: #c5cace; }
.apps-bar { display: flex; align-items: center; height: 60px; }
.search { width: 125px; height: 40px; margin: 0 4px 0 17px; border-radius: 20px; background: #26363d; display: flex; align-items: center; justify-content: center; gap: 6px; }
.cell { position: relative; width: 50px; height: 50px; margin: 0 2.500px; display: flex; align-items: center; justify-content: center; border-radius: 5px; }
.run::after { content: ""; position: absolute; left: 21px; bottom: 1px; width: 8px; height: 4px; border-radius: 2px; background: #979da0; }
.box { background: #26353e; border: 1px solid #2e3e47; }
.box::after { bottom: 0; left: 20px; }
.blue::after { left: 14px; width: 20px; background: #4cc2ff; }
.red { background: #462729; border-color: #462729; }
.red::after { background: #ff99a4; }
.badge { position: absolute; left: 25px; top: 3px; width: 20px; height: 20px; border-radius: 50%; background: #5f9c36; font: 13px/20px Roboto, sans-serif; text-align: center; }
.pyc { width: 26px; height: 26px; border: 3px solid; border-image: linear-gradient(135deg, #21d789, #d6e82c 40%, #fcf84a) 1; background: #000; font: bold 11px/14px "Open Sans", sans-serif; padding-left: 2px; letter-spacing: 0; }
.pyc i { display: block; width: 8px; height: 1.500px; margin-top: 2px; background: #fff; }
.tray { margin-left: auto; padding-right: 25px; display: flex; align-items: center; }
.tray > svg { margin-right: 10px; }
.lang { width: 40px; margin-right: 17px; align-items: center; margin-left: 2px; }
.tray > svg:nth-of-type(1) { margin-right: 12px; }
.clock { width: 74px; align-items: flex-end; margin-right: 9px; letter-spacing: -.5px; white-space: nowrap; }
.notif { width: 20px; height: 20px; border-radius: 50%; background: #4cc2ff; color: #10242e; font-size: 13px; text-align: center; }
```
